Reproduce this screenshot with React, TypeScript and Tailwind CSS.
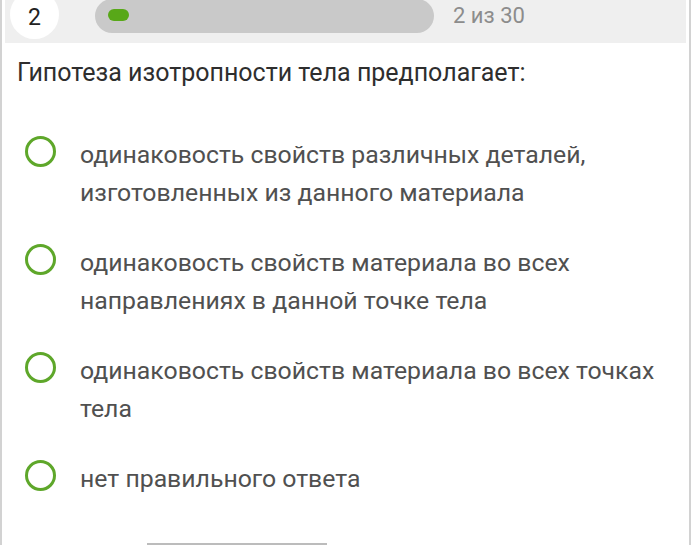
const options = [
  "одинаковость свойств различных деталей, изготовленных из данного материала",
  "одинаковость свойств материала во всех направлениях в данной точке тела",
  "одинаковость свойств материала во всех точках тела",
  "нет правильного ответа",
];

function ProgressHeader({ current, total }: { current: number; total: number }) {
  return (
    <div className="mx-[3px] h-[43px] bg-[#efefef] flex items-start">
      {/* question number badge, partly scrolled off the top */}
      <div className="ml-[5px] mt-[-10px] w-[49px] h-[49px] shrink-0 rounded-full bg-white flex items-center justify-center pt-[5px]">
        <span className="text-[23px] leading-none text-[#222]">{current}</span>
      </div>
      <div className="ml-[36px] mt-[-1px] w-[339px] h-[34px] shrink-0 rounded-full bg-[#c9c9c9] flex items-center pl-[13px]">
        <div className="w-[21px] h-[12px] rounded-full bg-[#58a818] mb-[2px]" />
      </div>
      <span className="ml-[19px] mt-[3px] text-[22px] leading-[26px] text-[#8c8c8c]">
        {current} из {total}
      </span>
    </div>
  );
}

export default function App() {
  return (
    <div
      className="w-[691px] h-[545px] overflow-hidden bg-white border-x-2 border-[#d2d2d2] flex flex-col"
      style={{ fontFamily: "Roboto, 'Noto Sans', sans-serif" }}
    >
      <ProgressHeader current={2} total={30} />

      <h2 className="mt-[15px] pl-[15px] text-[25px] leading-[30px] text-[#2e2e2e]">
        Гипотеза изотропности тела предполагает:
      </h2>

      <ul className="mt-[48px] pl-[23px] pr-[20px] flex flex-col gap-[32px]">
        {options.map((text) => (
          <li key={text} className="flex items-start gap-[24px]">
            <span className="w-[31px] h-[31px] shrink-0 rounded-full border-[3px] border-[#5ea72a]" />
            <span className="text-[24.8px] leading-[38px] text-[#505050] max-w-[580px]">{text}</span>
          </li>
        ))}
      </ul>

      <div className="mt-auto ml-[145px] w-[180px] h-[2px] bg-[#bcbcbc]" />
    </div>
  );
}
